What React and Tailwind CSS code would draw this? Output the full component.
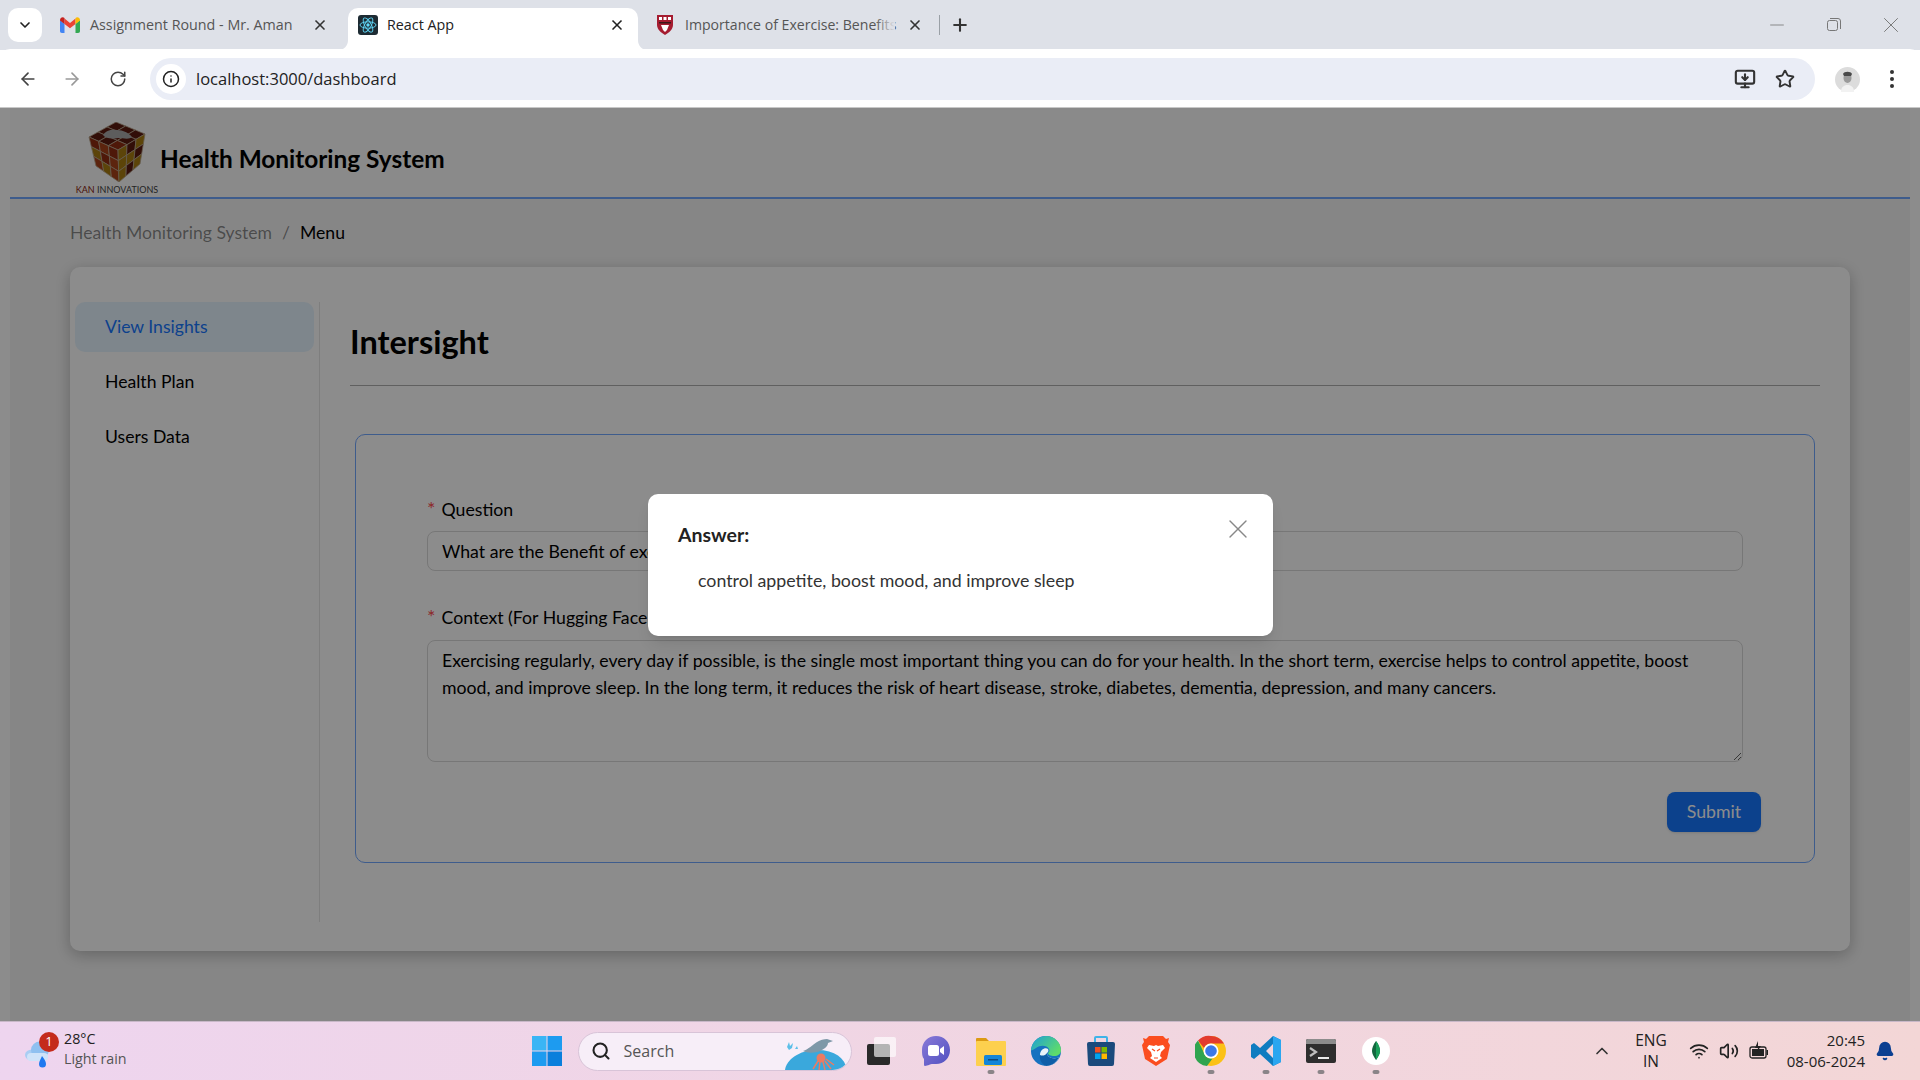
import { ArrowLeft, ArrowRight, RotateCw, Info, Star, X, Plus, ChevronDown, Minus, Search, ChevronUp, Wifi, Volume2, Bell, MonitorDown } from "lucide-react";

function GmailIcon() {
  return (
    <svg width="20" height="16" viewBox="0 0 20 16" className="shrink-0">
      <path d="M0 3v11c0 1 .6 2 2 2h2.5V7z" fill="#4285f4" />
      <path d="M20 3v11c0 1-.6 2-2 2h-2.5V7z" fill="#34a853" />
      <path d="M4.5 7V1.5L10 6l5.5-4.500V7L10 11.300z" fill="#ea4335" />
      <path d="M0 3c0-2.500 2.800-3.800 4.500-2v6L0 3.500z" fill="#c5221f" />
      <path d="M20 3c0-2.500-2.800-3.800-4.500-2v6L20 3.500z" fill="#fbbc04" />
    </svg>
  );
}

function ReactIcon() {
  return (
    <svg width="20" height="20" viewBox="0 0 20 20" className="shrink-0">
      <rect width="20" height="20" rx="3" fill="#1d2b33" />
      <circle cx="10" cy="10" r="1.700" fill="#61dafb" />
      <g fill="none" stroke="#61dafb" strokeWidth="0.900">
        <ellipse cx="10" cy="10" rx="8" ry="3.200" />
        <ellipse cx="10" cy="10" rx="8" ry="3.200" transform="rotate(60 10 10)" />
        <ellipse cx="10" cy="10" rx="8" ry="3.200" transform="rotate(120 10 10)" />
      </g>
    </svg>
  );
}

function ShieldIcon() {
  return (
    <svg width="18" height="20" viewBox="0 0 18 20" className="shrink-0">
      <path d="M1 0h16v10c0 4.500-4 7.500-8 10C5 17.500 1 14.500 1 10z" fill="#a51c30" />
      <path d="M3 2h3v3H3zM7.500 2h3v3h-3zM12 2h3v3h-3z" fill="#fff" />
      <path d="M3 7l12 0v1.500L3 8.500z" fill="#3b1a1a" />
      <path d="M5 10h8l-2 5-2 2-2-2z" fill="#fff" />
    </svg>
  );
}

// tile grid of one cube face, corners given clockwise from top-left
function CubeFace({ a, b, c, d, colors }) {
  const pt = (u, v) => [
    (a[0] * (1 - u) + b[0] * u) * (1 - v) + (d[0] * (1 - u) + c[0] * u) * v,
    (a[1] * (1 - u) + b[1] * u) * (1 - v) + (d[1] * (1 - u) + c[1] * u) * v,
  ];
  const tiles = [];
  colors.forEach((row, r) =>
    row.forEach((fill, k) => {
      const pts = [pt(k / 3, r / 3), pt((k + 1) / 3, r / 3), pt((k + 1) / 3, (r + 1) / 3), pt(k / 3, (r + 1) / 3)];
      tiles.push(<polygon key={`${r}-${k}`} points={pts.map((p) => p.join(",")).join(" ")} fill={fill} stroke="#b9a890" strokeWidth="0.800" />);
    })
  );
  return <g>{tiles}</g>;
}

function CubeLogo() {
  const red = "#8f2c12";
  const brick = "#a8431a";
  const dark = "#5c1a10";
  const yel = "#a87c12";
  return (
    <svg width="58" height="60" viewBox="0 0 58 60">
      <CubeFace a={[28, 0]} b={[57, 12]} c={[30, 28]} d={[1, 15]} colors={[[dark, dark, dark], [dark, dark, dark], [dark, dark, red]]} />
      <path d="M15 13c3-5 9-6 14-5 6 0 12 3 15 7-3 3-9 1-14 1-6 1-12 1-15-3z" fill="#a9a9a9" />
      <CubeFace a={[1, 15]} b={[30, 28]} c={[31, 60]} d={[8, 44]} colors={[[red, brick, red], [yel, red, brick], [brick, yel, brick]]} />
      <CubeFace a={[30, 28]} b={[57, 12]} c={[52, 42]} d={[31, 60]} colors={[[yel, dark, yel], [yel, yel, dark], [yel, dark, yel]]} />
    </svg>
  );
}

function WeatherIcon() {
  return (
    <svg width="26" height="27" viewBox="0 0 26 27">
      <ellipse cx="7" cy="14" rx="7" ry="5.500" fill="#a9cdf3" />
      <ellipse cx="15" cy="9" rx="9" ry="8.500" fill="#8fc0f0" />
      <rect x="2" y="12" width="21" height="8" rx="4" fill="#cfe3f9" />
      <path d="M17 15c2 3 4 5 4 8a3.500 3.500 0 01-7 0c0-3 2-5 3-8z" fill="#1f78f0" />
    </svg>
  );
}

function SearchArt() {
  return (
    <svg width="62" height="32" viewBox="0 0 62 32">
      <path d="M0 32C1 22 14 12 32 12s28 8 30 20z" fill="#3aa8dc" />
      <path d="M18 13c6-2 9-6 14-9 3-2 7-3 10-3l6 2-5 2c0 3-4 7-11 9-5 1-10 1-14-1z" fill="#7e98a8" />
      <path d="M2 9l2-5 1 4 3-3-1 5-3 2zM10 11l2-3 1 3z" fill="#5cbfe8" />
      <circle cx="36" cy="20" r="4.500" fill="#ea7b62" />
      <path d="M33 23l-5 8M35 24l-1 8M38 24l2 8M40 23l6 8M41 21l8 6" stroke="#ea7b62" strokeWidth="1.500" fill="none" />
    </svg>
  );
}

function TaskbarIcon({ running, children }) {
  return (
    <div className="relative w-[55px] h-[48px] flex items-center justify-center">
      {children}
      {running && <span className="absolute bottom-[1px] left-1/2 -translate-x-1/2 w-[7px] h-[4px] rounded-full bg-[#8a8488]" />}
    </div>
  );
}

function TaskbarIcons() {
  return (
    <div className="flex items-center">
      <TaskbarIcon>
        <svg width="30" height="30" viewBox="0 0 30 30">
          <rect x="1" y="8" width="23" height="21" rx="2" fill="#2a2a2a" />
          <rect x="8" y="1" width="22" height="20" rx="2" fill="#fff" fillOpacity="0.65" />
        </svg>
      </TaskbarIcon>
      <TaskbarIcon>
        <svg width="30" height="32" viewBox="0 0 30 32">
          <defs>
            <linearGradient id="chatGrad" x1="0" y1="0" x2="1" y2="1">
              <stop offset="0" stopColor="#8a7ad8" />
              <stop offset="1" stopColor="#4f50c0" />
            </linearGradient>
          </defs>
          <path d="M15 1c8 0 14 6 14 14s-6 14-14 14c-3 0-5-.500-7 1l-4 1c-1 0-1-1-1-2v-5C1 22 1 18 1 15 1 7 7 1 15 1z" fill="url(#chatGrad)" />
          <rect x="7" y="10" width="11" height="11" rx="2.500" fill="#fff" />
          <path d="M19 14l4-3v9l-4-3z" fill="#fff" />
        </svg>
      </TaskbarIcon>
      <TaskbarIcon running>
        <svg width="32" height="30" viewBox="0 0 32 30">
          <path d="M1 3a1 1 0 011-1h9l3 3h1v3H1z" fill="#dc9a12" />
          <rect x="1" y="5" width="30" height="25" rx="1" fill="#fdd04e" />
          <rect x="9" y="19" width="18" height="10" rx="1.500" fill="#1485d8" />
          <rect x="13" y="23" width="10" height="1.500" fill="#0b4a80" />
        </svg>
      </TaskbarIcon>
      <TaskbarIcon>
        <svg width="32" height="32" viewBox="0 0 32 32">
          <defs>
            <linearGradient id="edgeGrad" x1="0" y1="0" x2="1" y2="0.600">
              <stop offset="0" stopColor="#1c9fd8" />
              <stop offset="1" stopColor="#5fdc6a" />
            </linearGradient>
          </defs>
          <circle cx="16" cy="16" r="15" fill="#1672c0" />
          <path d="M1 15C2 6 9 1 16 1c9 0 15 7 15 14 0 4-3 6-7 6-3 0-6-1-6-3 1-1 2-2 1-4-2-4-9-4-13-1-2 1-4 3-5 2z" fill="url(#edgeGrad)" />
          <path d="M10 20c0-5 5-8 8-6 1 2 0 3-1 4 0 5 8 7 12 4-2 6-8 9-13 9-4-3-6-7-6-11z" fill="#e9f2f8" />
          <path d="M10 20c-1 5 2 9 6 11 6 0 11-4 13-9-4 3-12 1-12-4-2 3-5 3-7 2z" fill="#0f5ea8" />
        </svg>
      </TaskbarIcon>
      <TaskbarIcon>
        <svg width="30" height="32" viewBox="0 0 30 32">
          <path d="M9 8V3a1 1 0 011-1h10a1 1 0 011 1v5" stroke="#3fb3e8" strokeWidth="2" fill="none" />
          <path d="M1 9a2 2 0 012-2h24a2 2 0 012 2l-1 20a2 2 0 01-2 2H4a2 2 0 01-2-2z" fill="#1b4a7c" />
          <rect x="9" y="12" width="5.500" height="5.500" fill="#f25022" />
          <rect x="15.500" y="12" width="5.500" height="5.500" fill="#7fba00" />
          <rect x="9" y="18.500" width="5.500" height="5.500" fill="#00a4ef" />
          <rect x="15.500" y="18.500" width="5.500" height="5.500" fill="#ffb900" />
        </svg>
      </TaskbarIcon>
      <TaskbarIcon>
        <svg width="28" height="32" viewBox="0 0 28 32">
          <path d="M7 1h14l3 3 3-1-1 4 2 3-3 14-11 7-11-7L0 10l2-3-1-4 3 1z" fill="#fb4d1f" />
          <path d="M7 10l5 1 2-1 2 1 5-1 2 3-4 4-1 4 2 2-6 4-6-4 2-2-1-4-4-4z" fill="#fff" />
          <path d="M10 14l3 2M18 14l-3 2M12 23h4" stroke="#fb4d1f" strokeWidth="1.200" />
        </svg>
      </TaskbarIcon>
      <TaskbarIcon running>
        <svg width="32" height="32" viewBox="0 0 32 32">
          <circle cx="16" cy="16" r="15" fill="#fbc116" />
          <path d="M16 1a15 15 0 0113 7.500H16a7.500 7.500 0 00-7 4.500L3 5.500A15 15 0 0116 1z" fill="#e33b2e" />
          <path d="M3 5.500L9.500 19a7.500 7.500 0 008 4.500L12 31A15 15 0 013 5.500z" fill="#2fa44f" />
          <circle cx="16" cy="16" r="7.500" fill="#fff" />
          <circle cx="16" cy="16" r="5.800" fill="#3b78e7" />
        </svg>
      </TaskbarIcon>
      <TaskbarIcon running>
        <svg width="32" height="32" viewBox="0 0 32 32">
          <path d="M23 1l8 4v22l-8 4-13-12-6 5-3-2V10l3-2 6 5zm0 8l-7 7 7 7z" fill="#0f7cc0" />
          <path d="M23 1l8 4v22l-8 4z" fill="#2aa6f0" />
        </svg>
      </TaskbarIcon>
      <TaskbarIcon running>
        <svg width="30" height="24" viewBox="0 0 30 24">
          <rect width="30" height="24" rx="2" fill="#2e2e2e" />
          <path d="M2 0h26a2 2 0 012 2v3H0V2a2 2 0 012-2z" fill="#8c8c8c" />
          <path d="M4 9l6 4-6 4" stroke="#bdbdbd" strokeWidth="2.200" fill="none" />
          <path d="M12 19h11" stroke="#fff" strokeWidth="1.800" />
        </svg>
      </TaskbarIcon>
      <TaskbarIcon running>
        <svg width="28" height="30" viewBox="0 0 28 30">
          <circle cx="14" cy="15" r="14" fill="#fff" />
          <path d="M14 5c3 4 4 7 4 10s-2 6-4 9c-2-3-4-6-4-9s1-6 4-10z" fill="#13683f" />
          <path d="M14 5c3 4 4 7 4 10s-2 6-4 9z" fill="#19a05a" />
        </svg>
      </TaskbarIcon>
    </div>
  );
}

export default function App() {
  return (
    <div className="w-[1920px] h-[1080px] overflow-hidden flex flex-col bg-white font-[family-name:'Open_Sans',sans-serif]">
      {/* tab strip */}
      <div className="h-[50px] bg-[#dee1e8] flex items-end pl-2 shrink-0">
        <div className="w-[34px] h-[34px] mb-[8px] rounded-[10px] bg-white flex items-center justify-center">
          <ChevronDown className="w-4 h-4 text-[#222]" strokeWidth={2.500} />
        </div>
        <div className="w-[306px] h-[42px] flex items-center pl-[18px] pb-[8px] text-[14.300px] text-[#555]">
          <GmailIcon />
          <span className="ml-[10px] w-[205px] whitespace-nowrap">Assignment Round - Mr. Aman</span>
          <X className="w-4 h-4 ml-[17px] text-[#333]" strokeWidth={2.500} />
        </div>
        <div className="relative w-[290px] h-[42px] bg-white rounded-t-[10px] flex items-center pl-[10px] pr-[13px] pb-[8px] text-[14.300px] text-[#222]">
          <svg width="10" height="10" viewBox="0 0 10 10" className="absolute -left-[10px] bottom-0"><path d="M10 0v10H0c6 0 10-4 10-10z" fill="#fff" /></svg>
          <svg width="10" height="10" viewBox="0 0 10 10" className="absolute -right-[10px] bottom-0"><path d="M0 0v10h10C4 10 0 6 0 0z" fill="#fff" /></svg>
          <ReactIcon />
          <span className="ml-[9px] flex-1">React App</span>
          <X className="w-4 h-4 text-[#222]" strokeWidth={2.500} />
        </div>
        <div className="h-[42px] flex items-center pl-[18px] pb-[8px] text-[14.100px] text-[#555]">
          <ShieldIcon />
          <span className="relative ml-[11px] w-[210px] whitespace-nowrap">
            Importance of Exercise: Benefits
            <span className="absolute right-0 top-0 bottom-0 w-[20px] bg-gradient-to-r from-transparent to-[#dee1e8]" />
          </span>
          <X className="w-4 h-4 ml-[12px] text-[#333]" strokeWidth={2.500} />
          <div className="w-px h-[20px] bg-[#9aa0a6] ml-[16px]" />
        </div>
        <Plus className="w-5 h-5 text-[#333] mb-[15px] ml-[10px]" strokeWidth={2.500} />
        <div className="ml-auto flex items-center h-[50px] text-[#777] pr-[16px]">
          <Minus className="w-[22px] h-[22px] mr-[39px]" strokeWidth={0.900} />
          <svg width="14" height="14" viewBox="0 0 14 14" fill="none" stroke="currentColor" className="mr-[37px]">
            <rect x="0.500" y="2.500" width="10" height="10" rx="2" />
            <path d="M3 .500h8a2.500 2.500 0 012.500 2.500v8" />
          </svg>
          <X className="w-[26px] h-[26px]" strokeWidth={0.900} />
        </div>
      </div>

      {/* address bar */}
      <div className="h-[59px] bg-white rounded-t-[10px] border-b border-[#c8c8c8] flex items-center shrink-0 -mt-px pt-[2px]">
        <ArrowLeft className="w-5 h-5 ml-[18px] text-[#444]" />
        <ArrowRight className="w-5 h-5 ml-[24px] text-[#999]" />
        <RotateCw className="w-[18px] h-[18px] ml-[27px] text-[#444]" />
        <div className="ml-[23px] h-[42px] w-[1665px] rounded-full bg-[#eaedf6] flex items-center pl-[6px] pr-[20px]">
          <div className="w-[30px] h-[30px] rounded-full bg-white flex items-center justify-center">
            <Info className="w-[18px] h-[18px] text-[#222]" />
          </div>
          <span className="ml-[10px] text-[16.500px] text-[#222] flex-1">localhost:3000/dashboard</span>
          <MonitorDown className="w-[22px] h-[22px] text-[#333] mr-[19px]" strokeWidth={2.300} />
          <Star className="w-[20px] h-[20px] text-[#333]" strokeWidth={2.300} />
        </div>
        <svg width="25" height="25" viewBox="0 0 25 25" className="ml-[20px]">
          <circle cx="12.500" cy="12.500" r="12.500" fill="#dcdcdc" />
          <ellipse cx="12.500" cy="11" rx="4" ry="5" fill="#9a9a9a" />
          <path d="M8 7c1-3 8-3 9 0l-1 2H9z" fill="#4a4a4a" />
          <path d="M6 25c0-5 3-7 6.500-7s6.500 2 6.500 7z" fill="#f2f2f2" />
        </svg>
        <div className="ml-[30px] flex flex-col gap-[3px]">
          <span className="w-1 h-1 rounded-full bg-[#333]" />
          <span className="w-1 h-1 rounded-full bg-[#333]" />
          <span className="w-1 h-1 rounded-full bg-[#333]" />
        </div>
      </div>

      {/* page, dimmed by the modal mask */}
      <div className="relative flex-1 px-[10px] bg-white min-h-0 font-[family-name:Lato,sans-serif]">
        <div className="h-full bg-[#f5f5f5] flex flex-col">
          <header className="h-[91px] bg-white/60 border-b-2 border-[#72a8ff] pl-[66px] flex items-end shrink-0">
            <div className="flex flex-col items-center w-[82px]">
              <CubeLogo />
              <span className="text-[9px] leading-[12px] mt-[2px] mb-[1px] whitespace-nowrap text-[#444]"><span className="text-[#8a1c10]">KAN</span> INNOVATIONS</span>
            </div>
            <h1 className="ml-[2px] mb-[22px] text-[24.400px] font-bold text-black leading-[32px]">Health Monitoring System</h1>
          </header>

          <div className="px-[60px] pt-[21px] text-[17.600px] flex gap-[10px] text-[#00000073] shrink-0 leading-[26px]">
            <span>Health Monitoring System</span>
            <span>/</span>
            <span className="text-black">Menu</span>
          </div>

          <div className="mx-[60px] mt-[21px] h-[684px] bg-white rounded-[10px] shadow-[0_4px_16px_rgba(0,0,0,0.25)] flex pt-[35px]">
            <nav className="w-[250px] h-[620px] border-r border-[#e5e5e5] shrink-0 pl-[5px] pr-[5px] text-[17.600px] text-black">
              <div className="h-[50px] rounded-[10px] bg-[#e6f4ff] text-[#1677ff] flex items-center pl-[30px]">View Insights</div>
              <div className="h-[50px] mt-[5px] flex items-center pl-[30px]">Health Plan</div>
              <div className="h-[50px] mt-[5px] flex items-center pl-[30px]">Users Data</div>
            </nav>
            <main className="flex-1 pl-[30px] pr-[30px]">
              <h2 className="text-[32.500px] font-bold text-black leading-[40px] mt-[20px]">Intersight</h2>
              <div className="mt-[23px] h-px bg-[#b0b0b0]" />
              <div className="mt-[48px] ml-[5px] mr-[5px] h-[429px] border border-[#72a8ff] rounded-[10px] pt-[60px] pl-[71px] pr-[71px] text-[17.700px]">
                <label className="block h-[36px] leading-[26px] text-black"><span className="text-[#ff4d4f] text-[20px] mr-[6px]">*</span>Question</label>
                <input readOnly value="What are the Benefit of exercise?" className="w-full h-[40px] px-[14px] border border-[#d9d9d9] rounded-[8px] bg-white text-black outline-none" />
                <label className="block mt-[32px] h-[37px] leading-[26px] text-black"><span className="text-[#ff4d4f] text-[20px] mr-[6px]">*</span>Context (For Hugging Face Model)</label>
                <textarea readOnly rows={4} value="Exercising regularly, every day if possible, is the single most important thing you can do for your health. In the short term, exercise helps to control appetite, boost mood, and improve sleep. In the long term, it reduces the risk of heart disease, stroke, diabetes, dementia, depression, and many cancers." className="block w-full h-[122px] px-[14px] py-[6px] border border-[#d9d9d9] rounded-[8px] bg-white text-black leading-[27px] outline-none" />
                <div className="flex justify-end mt-[30px] -mr-[18px]">
                  <button className="w-[94px] h-[40px] rounded-[8px] bg-[#1677ff] text-white shadow-sm">Submit</button>
                </div>
              </div>
            </main>
          </div>
        </div>

        {/* mask + modal */}
        <div className="absolute inset-0 bg-black/45" />
        <div className="absolute left-[648px] top-[386px] w-[625px] h-[142px] bg-white rounded-[10px] shadow-lg pl-[30px] pt-[28px]">
          <div className="text-[19.500px] font-bold text-[#222] leading-[26px]">Answer:</div>
          <p className="mt-[19px] ml-[20px] text-[17.800px] text-[#333] leading-[26px]">control appetite, boost mood, and improve sleep</p>
          <X className="absolute right-[19px] top-[19px] w-[32px] h-[32px] text-[#888]" strokeWidth={1} />
        </div>
      </div>

      {/* taskbar */}
      <div className="h-[59px] shrink-0 bg-gradient-to-r from-[#eed5ef] to-[#f3d6d6] border-t border-[#c8b8c8] relative flex items-center text-[#222]">
        <div className="relative ml-[25px] w-[39px] mt-[6px]">
          <WeatherIcon />
          <span className="absolute -top-[9px] left-[14px] w-[20px] h-[20px] rounded-full bg-[#c42b1c] text-white text-[13px] flex items-center justify-center">1</span>
        </div>
        <div className="text-[14.300px] leading-[20px] -mt-[4px]">
          <div>28°C</div>
          <div className="text-[#555]">Light rain</div>
        </div>
        <div className="ml-[405px] flex items-center">
          <svg width="30" height="30" viewBox="0 0 30 30">
            <rect width="14.500" height="14.500" fill="#3ab5f5" />
            <rect x="15.500" width="14.500" height="14.500" fill="#1d9bf0" />
            <rect y="15.500" width="14.500" height="14.500" fill="#1d9bf0" />
            <rect x="15.500" y="15.500" width="14.500" height="14.500" fill="#0a7fdc" />
          </svg>
          <div className="ml-[16px] w-[274px] h-[39px] rounded-full bg-[#f7eef8] border border-[#d8c4d8] flex items-center pl-[12px] relative overflow-hidden">
            <Search className="w-[20px] h-[20px] text-[#222]" strokeWidth={2.500} />
            <span className="ml-[13px] text-[16px] text-[#555]">Search</span>
            <div className="absolute right-[4px] bottom-0 flex"><SearchArt /></div>
          </div>
          <div className="ml-[2px]"><TaskbarIcons /></div>
        </div>
        <div className="ml-auto flex items-center pr-[25px]">
          <ChevronUp className="w-5 h-5 text-[#333] mr-[23px]" />
          <div className="text-[15.500px] leading-[21px] text-center mr-[22px]">ENG<br />IN</div>
          <Wifi className="w-5 h-5 text-[#222] mr-[10px]" />
          <Volume2 className="w-5 h-5 text-[#222] mr-[10px]" />
          <svg width="20" height="20" viewBox="0 0 20 20" className="mr-[18px]">
            <rect x="1" y="6" width="16" height="11" rx="2" fill="none" stroke="#222" strokeWidth="1.300" />
            <rect x="3" y="8" width="12" height="7" fill="#222" />
            <rect x="17.500" y="9" width="1.500" height="5" fill="#222" />
            <path d="M9 0l-3 7h3l-1 4 4-6H9z" fill="#222" />
          </svg>
          <div className="text-[15px] leading-[21px] text-right mr-[10px]">20:45<br />08-06-2024</div>
          <Bell className="w-5 h-5 text-[#0b3f91]" fill="#0b3f91" />
        </div>
      </div>
    </div>
  );
}
